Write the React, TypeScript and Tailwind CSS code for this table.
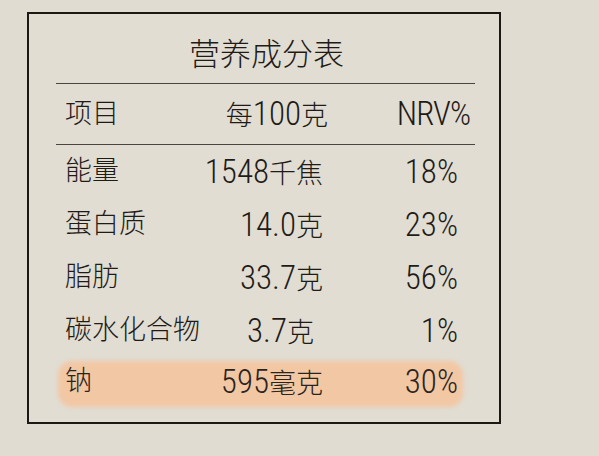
import React from "react";

function Mixed({ text, track = "tracking-[0px]" }: { text: string; track?: string }) {
  const parts = text.match(/[\x00-\x7F]+|[^\x00-\x7F]+/g) || [];
  return (
    <>
      {parts.map((p, i) =>
        /^[\x00-\x7F]+$/.test(p) ? (
          <span
            key={i}
            className={`text-[33px] font-light ${track}`}
            style={{ fontFamily: '"Roboto Condensed", "Liberation Sans", sans-serif' }}
          >
            {p}
          </span>
        ) : (
          <span key={i} className="text-[27px] font-light">
            {p}
          </span>
        )
      )}
    </>
  );
}

const rows = [
  { name: "能量", value: "1548千焦", nrv: "18%", vpr: "pr-[5px]" },
  { name: "蛋白质", value: "14.0克", nrv: "23%", vpr: "pr-[5px]" },
  { name: "脂肪", value: "33.7克", nrv: "56%", vpr: "pr-[5px]" },
  { name: "碳水化合物", value: "3.7克", nrv: "1%", vpr: "pr-[14px]" },
];

export default function App() {
  return (
    <div
      className="w-[599px] h-[456px] bg-[#e0dcd1] pt-[12px] pl-[27px] text-[#1f1b17]"
      style={{ fontFamily: '"Noto Sans CJK SC", "Noto Sans", sans-serif' }}
    >
      <div className="w-[474px] h-[412px] border-2 border-[#1c1915] bg-[#e1ddd3]">
        <div className="mt-[20px] h-[36px] leading-[36px] text-center text-[31px] font-light pl-[5px]">
          营养成分表
        </div>
        <div className="ml-[27px] mr-[24px]">
          <div className="mt-[13px] h-px bg-[#4a4540]" />
          <div className="flex items-center h-[60px]">
            <div className="w-[140px] pl-[9px] text-[27px] font-light -mt-[3px]">项目</div>
            <div className="w-[132px] whitespace-nowrap flex justify-end items-baseline">
              <Mixed text="每100克" />
            </div>
            <div className="w-[142px] flex justify-end items-baseline">
              <Mixed text="NRV%" track="tracking-[-1px]" />
            </div>
          </div>
          <div className="h-px bg-[#4a4540]" />
          {rows.map((r) => (
            <div key={r.name} className="flex items-center h-[53px]">
              <div className="w-[140px] pl-[9px] whitespace-nowrap text-[27px] font-light -mt-[4px]">{r.name}</div>
              <div className={`w-[132px] whitespace-nowrap flex justify-end items-baseline ${r.vpr}`}>
                <Mixed text={r.value} />
              </div>
              <div className="w-[130px] flex justify-end items-baseline">
                <Mixed text={r.nrv} />
              </div>
            </div>
          ))}
          <div className="relative flex items-center h-[49px] text-[#2a2420]">
            <div className="absolute left-[2px] w-[405px] top-[4px] bottom-[-1px] rounded-[14px] bg-[#f2c7a4] blur-[2px]" />
            <div className="relative w-[140px] pl-[9px] text-[27px] font-light -mt-[4px]">钠</div>
            <div className="relative w-[132px] whitespace-nowrap pr-[5px] flex justify-end items-baseline">
              <Mixed text="595毫克" />
            </div>
            <div className="relative w-[130px] flex justify-end items-baseline">
              <Mixed text="30%" />
            </div>
          </div>
        </div>
      </div>
    </div>
  );
}
